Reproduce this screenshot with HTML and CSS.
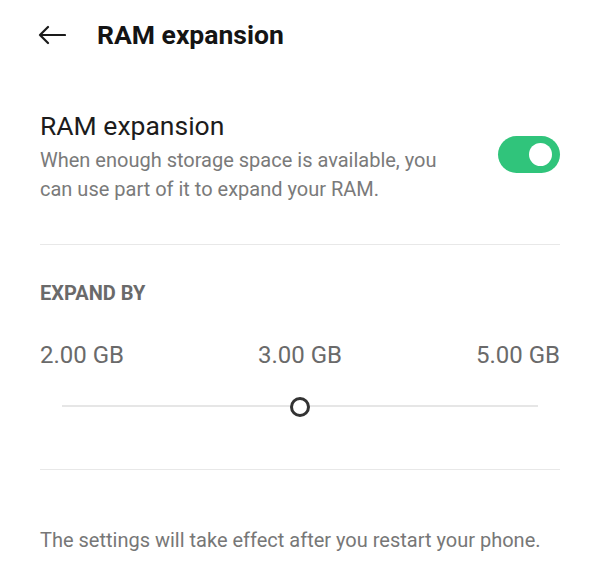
FILE: index.html
```html
<!DOCTYPE html>
<html lang="en">
<head>
<meta charset="utf-8">
<title>RAM expansion</title>
<link rel="stylesheet" href="styles.css">
</head>
<body>
<header class="appbar">
  <svg class="back" width="28" height="20" viewBox="0 0 28 20" aria-hidden="true">
    <path d="M27 10 H2 M10 2 L2 10 L10 18" fill="none" stroke="#1a1a1a" stroke-width="2.2" stroke-linecap="round" stroke-linejoin="round"/>
  </svg>
  <h1 class="appbar-title">RAM expansion</h1>
</header>
<main class="content">
  <section class="setting">
    <div class="setting-text">
      <div class="setting-title">RAM expansion</div>
      <p class="setting-desc">When enough storage space is available, you can use part of it to expand your RAM.</p>
    </div>
    <div class="switch"><span class="switch-knob"></span></div>
  </section>
  <hr class="divider divider-first">
  <div class="section-label">EXPAND BY</div>
  <div class="values">
    <span>2.00 GB</span>
    <span>3.00 GB</span>
    <span>5.00 GB</span>
  </div>
  <div class="slider">
    <div class="track"></div>
    <span class="thumb"></span>
  </div>
  <hr class="divider divider-second">
  <p class="footnote">The settings will take effect after you restart your phone.</p>
</main>
</body>
</html>
```
FILE: styles.css
```css
html, body {
  margin: 0;
  padding: 0;
  background: #ffffff;
}
body {
  font-family: Roboto, "Noto Sans", "Liberation Sans", sans-serif;
  width: 600px;
  height: 578px;
  overflow: hidden;
}
.appbar {
  height: 70px;
  display: flex;
  align-items: center;
  padding-left: 38px;
  gap: 31px;
}
.back {
  display: block;
}
.appbar-title {
  margin: 0;
  font-size: 26.5px;
  line-height: 30px;
  font-weight: 700;
  color: #141414;
}
.content {
  padding: 40px 40px 0 40px;
}
.setting {
  display: flex;
  align-items: center;
  justify-content: space-between;
  gap: 40px;
}
.setting-text {
  flex: 1;
}
.setting-title {
  font-size: 26.5px;
  line-height: 32px;
  color: #1c1c1c;
}
.setting-desc {
  margin: 4px 0 0 0;
  font-size: 20px;
  line-height: 29px;
  color: #7a7a7a;
  max-width: 415px;
}
.switch {
  width: 62px;
  height: 37px;
  border-radius: 19px;
  background: #30c47b;
  position: relative;
  flex: none;
  margin-top: -6px;
}
.switch-knob {
  position: absolute;
  right: 8px;
  top: 7px;
  width: 23px;
  height: 23px;
  border-radius: 50%;
  background: #ffffff;
}
.divider {
  border: 0;
  height: 1px;
  background: #e8e8e8;
  margin: 0;
}
.divider-first {
  margin-top: 40px;
}
.section-label {
  margin-top: 36px;
  font-size: 20px;
  line-height: 24px;
  font-weight: 700;
  color: #6a6a6a;
}
.values {
  margin-top: 36px;
  display: flex;
  justify-content: space-between;
  font-size: 24px;
  line-height: 28px;
  color: #6a6a6a;
}
.slider {
  margin: 25px 22px 0 22px;
  height: 24px;
  position: relative;
  display: flex;
  align-items: center;
}
.track {
  flex: 1;
  height: 2px;
  background: #e6e6e6;
}
.thumb {
  position: absolute;
  left: 228px;
  top: 3px;
  width: 14px;
  height: 14px;
  border: 3px solid #333333;
  border-radius: 50%;
  background: #ffffff;
}
.divider-second {
  margin-top: 51px;
}
.footnote {
  margin: 58px 0 0 0;
  font-size: 20px;
  line-height: 24px;
  color: #777777;
}
```
